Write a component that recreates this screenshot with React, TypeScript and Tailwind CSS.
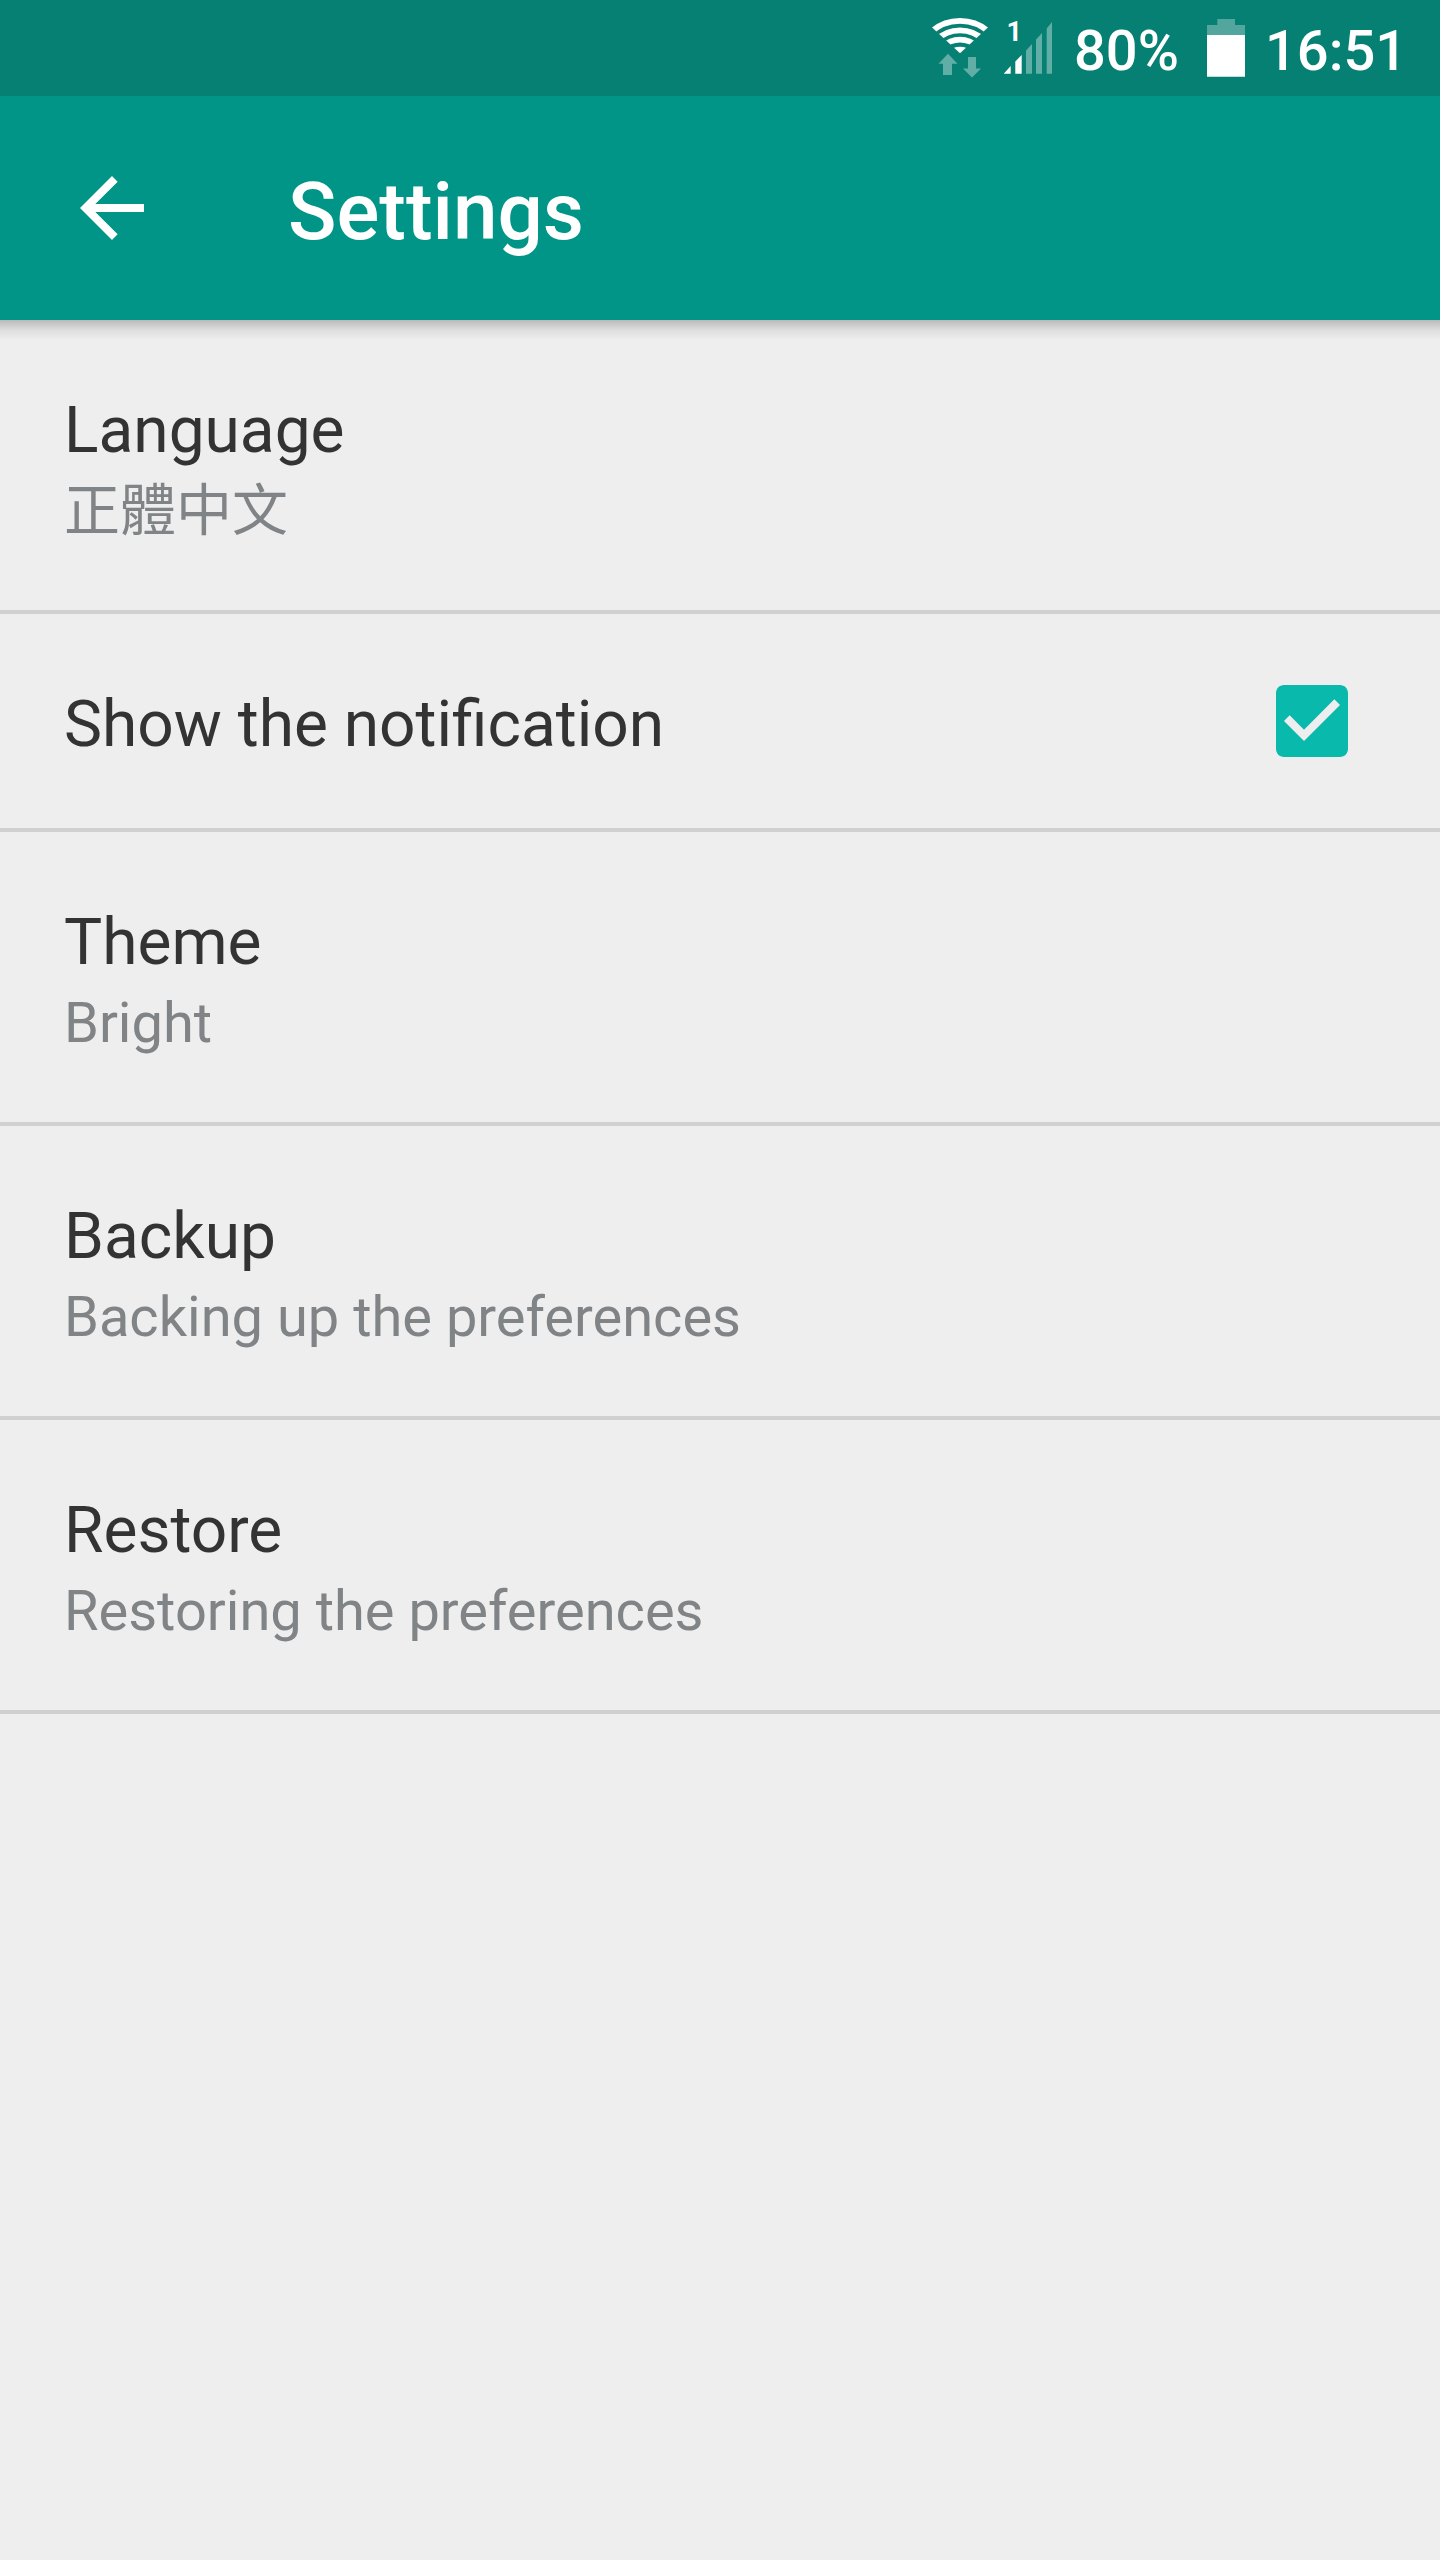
import React from "react";

type Item = { title: string; summary?: string; checked?: boolean };

const items: Item[] = [
  { title: "Language", summary: "正體中文" },
  { title: "Show the notification", checked: true },
  { title: "Theme", summary: "Bright" },
  { title: "Backup", summary: "Backing up the preferences" },
  { title: "Restore", summary: "Restoring the preferences" },
];

function WifiIcon() {
  return (
    <svg className="h-24 w-[58px] shrink-0" viewBox="931 0 58 96" fill="none">
      <clipPath id="wifi-wedge">
        <path d="M960 53.300L928 23.600V10H992V23.600Z" />
      </clipPath>
      <g clipPath="url(#wifi-wedge)" stroke="#fff" strokeWidth="5.8">
        <circle cx="960" cy="64" r="43.200" />
        <circle cx="960" cy="64" r="33.700" />
        <circle cx="960" cy="64" r="24.400" />
        <circle cx="960" cy="64" r="14" strokeWidth="6.500" />
      </g>
      <path d="M948 53.700L957.500 63.700H952V75H943V63.700H938.500Z" fill="#60aea6" />
      <path d="M968 57H976V68.500H981L972 77.500L963 68.500H968Z" fill="#60aea6" />
    </svg>
  );
}

function SignalIcon() {
  return (
    <svg className="ml-[14px] h-24 w-[51px] shrink-0" viewBox="1003 0 51 96">
      <text x="1006.5" y="41" fontSize="27" fontWeight="700" fill="#fff" fontFamily="Roboto, sans-serif">
        1
      </text>
      <path d="M1003.700 73.700L1010.700 66V73.700ZM1015.300 73.700V61.500L1021.700 55V73.700Z" fill="#fff" />
      <path
        d="M1026 73.700V50.500L1032 44V73.700ZM1036 73.700V39.500L1042 33V73.700ZM1046.700 73.700V28.500L1052 22V73.700Z"
        fill="#60aea6"
      />
    </svg>
  );
}

function BatteryIcon() {
  return (
    <svg className="h-24 w-[38px] shrink-0" viewBox="1207 0 38 96">
      <path d="M1217.300 19H1235V25H1245V35H1207V25H1217.300Z" fill="#53a69d" />
      <path d="M1207 35H1245V76.800H1207Z" fill="#fff" />
    </svg>
  );
}

function Row({ item }: { item: Item }) {
  return (
    <li className="flex items-center justify-between border-b-4 border-[#d0d0d0] pl-16 pr-20">
      <div className={item.summary ? "h-[290px] pt-[73px]" : "h-[214px] pt-[73px]"}>
        <div className="text-[64px] leading-[76px] text-[#333333]">{item.title}</div>
        {item.summary && (
          <div className="mt-1 h-[76px] text-[56px] leading-[76px] text-[#808486]">{item.summary}</div>
        )}
      </div>
      {item.checked && (
        <svg className="size-24" viewBox="0 0 24 24" fill="#08b9ac">
          <path d="M19 3H5c-1.110 0-2 .9-2 2v14c0 1.100.89 2 2 2h14c1.110 0 2-.9 2-2V5c0-1.100-.89-2-2-2zm-9 14l-5-5 1.410-1.410L10 14.170l7.590-7.590L19 8l-9 9z" />
        </svg>
      )}
    </li>
  );
}

export default function App() {
  return (
    <div className="h-[2560px] w-[1440px] overflow-hidden bg-[#eeeeee] font-['Roboto','Noto_Sans_CJK_TC',sans-serif]">
      <div className="flex h-24 items-center justify-end bg-[#058073] pr-[36px] text-[56px] font-medium leading-[66px] text-white">
        <WifiIcon />
        <SignalIcon />
        <span className="ml-5 w-[133px] whitespace-nowrap pt-1.5">80%</span>
        <BatteryIcon />
        <span className="ml-5 w-[139px] whitespace-nowrap pt-1.5">16:51</span>
      </div>
      <header className="relative flex h-56 items-center bg-[#009587] pl-16">
        <svg className="size-24" viewBox="0 0 24 24" fill="#fff">
          <path d="M20 11H7.830l5.590-5.590L12 4l-8 8 8 8 1.410-1.410L7.830 13H20v-2z" />
        </svg>
        <h1 className="ml-32 pt-2 text-[80px] font-medium leading-[94px] text-white">Settings</h1>
        <div className="absolute inset-x-0 top-full h-5 bg-gradient-to-b from-black/22 via-black/7 to-transparent" />
      </header>
      <ul>
        {items.map((item) => (
          <Row key={item.title} item={item} />
        ))}
      </ul>
    </div>
  );
}
